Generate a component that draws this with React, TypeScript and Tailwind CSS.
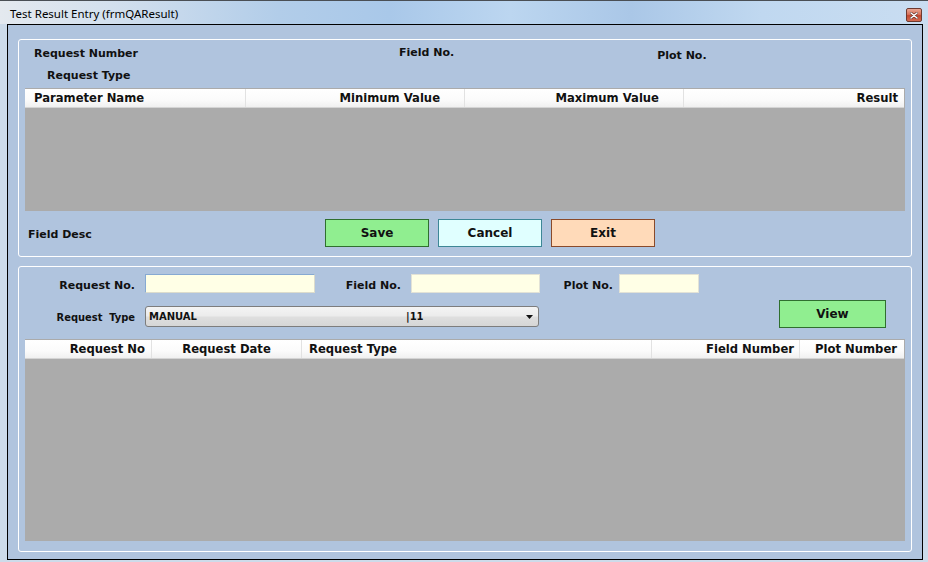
import React from "react";

type Col = { w: number; label: string; cls: string };

function Grid({ cols, bodyH }: { cols: Col[]; bodyH: number }) {
  return (
    <div className="w-[880px] bg-[#ababab] pt-[1px]">
      <div className="w-[879px] h-[19px] flex border-b border-[#d4d4d4] bg-[linear-gradient(180deg,#ffffff_0%,#fbfbfb_60%,#f0f0f0_100%)]">
        {cols.map((c, i) => (
          <div
            key={i}
            style={{ width: c.w }}
            className={
              "h-full flex items-center pt-[2px] text-[11.6px] font-bold text-[#111] leading-none whitespace-nowrap " +
              (i < cols.length - 1 ? "border-r border-[#e2e2e2] " : "") +
              c.cls
            }
          >
            {c.label}
          </div>
        ))}
      </div>
      <div style={{ height: bodyH }} className="w-full bg-[#ababab]" />
    </div>
  );
}

export default function App() {
  const grid1: Col[] = [
    { w: 221, label: "Parameter Name", cls: "justify-start pl-[9px]" },
    { w: 219, label: "Minimum Value", cls: "justify-end pr-[24px]" },
    { w: 219, label: "Maximum Value", cls: "justify-end pr-[24px]" },
    { w: 220, label: "Result", cls: "justify-end pr-[6px]" },
  ];
  const grid2: Col[] = [
    { w: 127, label: "Request No", cls: "justify-end pr-[6px]" },
    { w: 150, label: "Request Date", cls: "justify-center" },
    { w: 350, label: "Request Type", cls: "justify-start pl-[7px]" },
    { w: 148, label: "Field Number", cls: "justify-end pr-[5px]" },
    { w: 104, label: "Plot Number", cls: "justify-end pr-[7px]" },
  ];

  const lbl = "text-[11px] font-bold text-[#111] leading-[13px] whitespace-nowrap";
  const lbl2 =
    "text-[11px] font-bold text-[#111] leading-[13px] whitespace-nowrap font-['DejaVu_Sans_Condensed','DejaVu_Sans',sans-serif]";

  return (
    <div className="w-[928px] h-[562px] overflow-hidden flex flex-col bg-[#cddbea] font-['DejaVu_Sans',sans-serif]">
      {/* Title bar */}
      <div className="h-[24px] shrink-0 flex items-start border-t border-[#4a4f55] bg-[linear-gradient(90deg,#e4e9ef_0%,#d3e0ee_12%,#b2cde9_30%,#a9c8e9_42%,#bcd6f0_55%,#aac7e7_68%,#c0d8f0_82%,#c9ddf1_100%)]">
        <span className="mt-[5px] ml-[10px] text-[11.5px] leading-[15px] text-black font-['Noto_Sans',sans-serif]">
          Test Result Entry (frmQAResult)
        </span>
        <div className="ml-auto mr-[6px] mt-[7px] w-[16px] h-[14px] rounded-[2px] border border-[#6e3a30] bg-[linear-gradient(180deg,#e9a793_0%,#d8715a_45%,#c2482f_55%,#d36b52_100%)] flex items-center justify-center">
          <svg width="8" height="7" viewBox="0 0 8 7">
            <path d="M1 1 L7 6 M7 1 L1 6" stroke="#5a2a22" strokeWidth="2.6" strokeLinecap="round" />
            <path d="M1 1 L7 6 M7 1 L1 6" stroke="#ffffff" strokeWidth="1.5" strokeLinecap="round" />
          </svg>
        </div>
      </div>

      {/* Frame + client */}
      <div className="flex-1 flex pl-[7px] pr-[5px] pb-[2px]">
        <div className="flex-1 border border-black bg-[#b0c4de] flex flex-col pl-[10px] pr-[10px] pt-[14px]">
          {/* Top panel */}
          <div className="h-[218px] border border-white rounded-[3px] flex flex-col px-[6px]">
            <div className="h-[27px] flex items-start">
              <span className={lbl + " ml-[9px] mt-[7px]"}>Request Number</span>
              <span className={lbl + " ml-[261px] mt-[6px]"}>Field No.</span>
              <span className={lbl + " ml-[203px] mt-[9px]"}>Plot No.</span>
            </div>
            <div className="h-[21px] flex items-start">
              <span className={lbl + " ml-[22px] mt-[2px]"}>Request Type</span>
            </div>
            <Grid cols={grid1} bodyH={103} />
            <div className="h-[44px] flex items-start">
              <div className="w-[300px] flex">
                <span className={lbl + " ml-[3px] mt-[17px]"}>Field Desc</span>
              </div>
              <div className="flex gap-[9px] mt-[8px]">
                <button className="w-[104px] h-[28px] border border-[#2f6f2f] bg-[#90ee90] text-[12px] font-bold text-[#111] leading-none">
                  Save
                </button>
                <button className="w-[104px] h-[28px] border border-[#3d8796] bg-[#e0ffff] text-[12px] font-bold text-[#111] leading-none">
                  Cancel
                </button>
                <button className="w-[104px] h-[28px] border border-[#8a4a2a] bg-[#ffdab9] text-[12px] font-bold text-[#111] leading-none">
                  Exit
                </button>
              </div>
            </div>
          </div>

          {/* Bottom panel */}
          <div className="mt-[9px] h-[286px] border border-white rounded-[3px] flex flex-col px-[6px]">
            <div className="mt-[7px] h-[19px] flex items-start">
              <div className={lbl + " w-[110px] text-right mt-[5px]"}>Request No.</div>
              <div className="ml-[10px] w-[170px] h-[19px] bg-[#ffffe6] border border-[#86a9d2] border-b-[#dcdccc] border-r-[#dcdccc]" />
              <div className={lbl + " w-[86px] text-right mt-[5px]"}>Field No.</div>
              <div className="ml-[10px] w-[129px] h-[19px] bg-[#ffffe6] border border-[#e2e2d6]" />
              <div className={lbl + " w-[73px] text-right mt-[5px]"}>Plot No.</div>
              <div className="ml-[6px] w-[80px] h-[19px] bg-[#ffffe6] border border-[#e2e2d6]" />
            </div>
            <div className="mt-[7px] h-[28px] flex items-start">
              <div className={lbl2 + " w-[110px] text-right mt-[11px]"}>Request&nbsp; Type</div>
              <div className="ml-[10px] mt-[6px] w-[394px] h-[21px] rounded-[3px] border border-[#7d7d7d] bg-[linear-gradient(180deg,#f4f4f4_0%,#ececec_45%,#dedede_55%,#d6d6d6_100%)] flex items-center">
                <span className="ml-[3px] w-[257px] text-[10px] font-bold text-[#111] leading-none">MANUAL</span>
                <span className="text-[10px] font-bold text-[#111] leading-none">|11</span>
                <svg className="ml-auto mr-[5px]" width="7" height="4" viewBox="0 0 7 4">
                  <path d="M0 0 H7 L3.5 4 Z" fill="#111" />
                </svg>
              </div>
              <button className="ml-[240px] w-[107px] h-[28px] border border-[#2f6f2f] bg-[#90ee90] text-[12px] font-bold text-[#111] leading-none">
                View
              </button>
            </div>
            <div className="mt-[11px]">
              <Grid cols={grid2} bodyH={182} />
            </div>
          </div>
        </div>
      </div>
    </div>
  );
}
